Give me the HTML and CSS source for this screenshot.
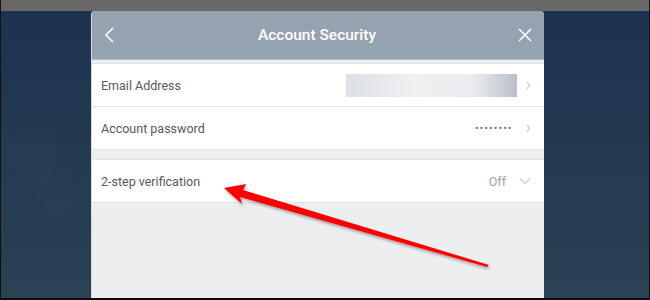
FILE: index.html
```html
<!DOCTYPE html>
<html lang="en">
  <head>
    <meta charset="UTF-8" />
    <meta name="viewport" content="width=device-width, initial-scale=1.0" />
    <title>Account Security</title>
    <link rel="stylesheet" href="styles.css">
  </head>
  <body>
    <div class="frame">
      <div class="topbar"></div>
      <div class="stage">
        <div class="hex hex1"></div>
        <div class="hex hex2"></div>
        <div class="modal">
          <div class="header">
            <svg class="hdrIcon" width="14" height="18" viewBox="0 0 14 18"><path d="M10 2 L3 9 L10 16" fill="none" stroke="#fff" stroke-width="1.6"/></svg>
            <span class="title">Account Security</span>
            <svg class="hdrIcon" width="16" height="16" viewBox="0 0 16 16"><path d="M2 2 L14 14 M14 2 L2 14" fill="none" stroke="#fff" stroke-width="1.6"/></svg>
          </div>
          <div class="gap small"></div>
          <div class="group">
            <div class="row">
              <span class="label">Email Address</span>
              <span class="value"><span class="blur"></span><span class="chev">&#x203A;</span></span>
            </div>
            <div class="row">
              <span class="label">Account password</span>
              <span class="value"><span class="dots">••••••••</span><span class="chev">&#x203A;</span></span>
            </div>
          </div>
          <div class="gap"></div>
          <div class="group">
            <div class="row">
              <span class="label">2-step verification</span>
              <span class="value"><span class="off">Off</span>
                <svg class="down" width="12" height="8" viewBox="0 0 12 8"><path d="M1 1.5 L6 6.5 L11 1.5" fill="none" stroke="#c8ccd0" stroke-width="1.2"/></svg>
              </span>
            </div>
          </div>
          <div class="rest"></div>
        </div>
      </div>
      <div class="bottomline"></div>
    </div>

    <svg class="arrow" width="650" height="300" viewBox="0 0 650 300">
      <defs>
        <filter id="sh" x="-10%" y="-10%" width="120%" height="130%">
          <feDropShadow dx="1" dy="2" stdDeviation="1.5" flood-color="#000" flood-opacity="0.35"/>
        </filter>
      </defs>
      <path d="M224 188 L246 184 L243 190 L489 265 L487 267 L240 197 L242 204 Z" fill="#ff0000" filter="url(#sh)"/>
    </svg>
  </body>
</html>
```

FILE: styles.css
```css
body {
  margin: 0;
  width: 650px;
  height: 300px;
  overflow: hidden;
  font-family: Roboto, "Noto Sans", sans-serif;
  background: #000;
}
.frame {
  display: flex;
  flex-direction: column;
  height: 300px;
  border-left: 1px solid #111;
  border-right: 1px solid #111;
  box-sizing: border-box;
}
.topbar {
  height: 11px;
  background: #686868;
}
.stage {
  position: relative;
  flex: 1;
  display: flex;
  padding-left: 90px;
  background: linear-gradient(#1c3250, #2a4252);
  overflow: hidden;
}
.bottomline {
  height: 2px;
  background: #0c0c0c;
}
.hex {
  position: absolute;
  width: 58px;
  height: 56px;
  background: rgba(255, 255, 255, 0.012);
  clip-path: polygon(25% 0, 75% 0, 100% 50%, 75% 100%, 25% 100%, 0 50%);
}
.hex1 {
  left: 4px;
  top: 116px;
}
.hex2 {
  left: 34px;
  top: 159px;
  width: 46px;
  height: 48px;
}
.modal {
  position: relative;
  width: 452px;
  display: flex;
  flex-direction: column;
  background: #eceef0;
  border-radius: 4px 4px 0 0;
  border-left: 1px solid #d6dade;
  overflow: hidden;
}
.header {
  height: 49px;
  flex-shrink: 0;
  display: flex;
  align-items: center;
  justify-content: space-between;
  padding: 0 11px 0 11px;
  background: #95a3b0;
  border-bottom: 1px solid #b5bfc8;
  box-sizing: border-box;
}
.title {
  color: #fff;
  font-size: 15.5px;
  font-weight: 500;
}
.gap {
  height: 9px;
  border-bottom: 1px solid #dfe2e5;
}
.gap.small {
  height: 3px;
}
.group {
  background: #fff;
}
.row {
  height: 42px;
  display: flex;
  align-items: center;
  justify-content: space-between;
  padding: 0 13px 0 9px;
  border-bottom: 1px solid #e1e4e7;
  font-size: 12.5px;
  color: #555a60;
}
.value {
  display: flex;
  align-items: center;
  gap: 9px;
  color: #9a9fa5;
}
.blur {
  width: 171px;
  height: 23px;
  background: linear-gradient(90deg, #dde0e4, #eef0f2 40%, #e9ebee 75%, #b9bfc7);
}
.chev {
  color: #ccd0d4;
  font-size: 18px;
  line-height: 1;
  margin-top: -2px;
}
.dots {
  font-size: 11px;
  letter-spacing: 1px;
  color: #777;
  margin-right: 4px;
}
.off {
  color: #a0a4a8;
  margin-right: 2px;
}
.down {
  margin-left: 2px;
}
.rest {
  flex: 1;
}
.arrow {
  position: absolute;
  left: 0;
  top: 0;
  pointer-events: none;
}
```
